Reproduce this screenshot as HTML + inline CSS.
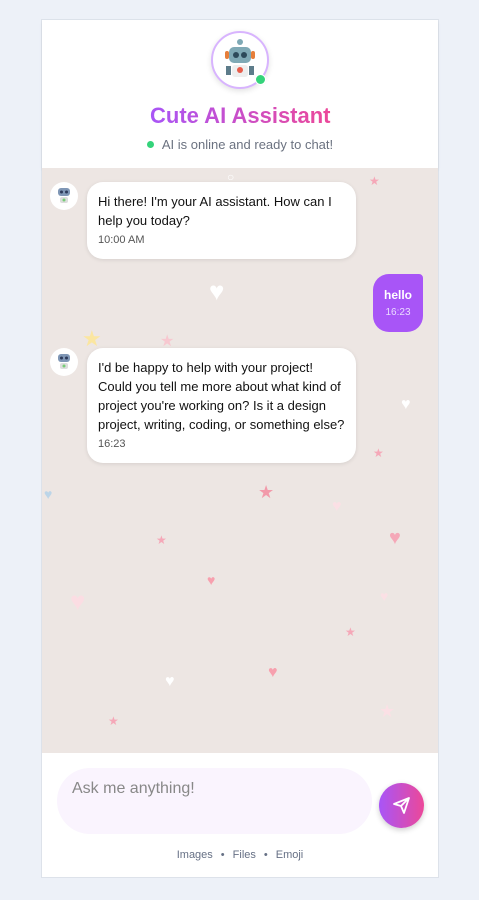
<!DOCTYPE html>
<html><head><meta charset="utf-8"><style>
*{box-sizing:border-box;margin:0;padding:0}
body{width:479px;height:900px;background:#edf1f8;font-family:"Liberation Sans",sans-serif;position:relative;overflow:hidden}
.card{position:absolute;left:41px;top:19px;width:398px;height:859px;background:#fff;border:1px solid #dde2ea}
.hdr{height:148px;text-align:center;position:relative;box-shadow:0 2px 3px rgba(0,0,0,.06)}
.av{position:absolute;left:169px;top:11px;width:58px;height:58px;border-radius:50%;border:2px solid #d8b4fe;background:#fff;box-shadow:0 2px 6px rgba(0,0,0,.12)}
.dot{position:absolute;left:213px;top:54px;width:11px;height:11px;border-radius:50%;background:#34d37a;border:1.5px solid #fff}
h1{position:absolute;left:108px;top:83px;font-size:22px;font-weight:bold;background:linear-gradient(90deg,#a855f7,#ec4899);-webkit-background-clip:text;color:transparent;background-clip:text;display:inline-block}
.st{position:absolute;left:0;right:0;top:117px;font-size:13px;color:#6b7280}
.st:before{content:"";display:inline-block;width:7px;height:7px;border-radius:50%;background:#34d37a;margin-right:8px;vertical-align:1px}
.chat{position:absolute;left:0;top:148px;width:396px;height:585px;background:#ede6e3;overflow:hidden}
.b{position:absolute;background:#fff;border-radius:16px;box-shadow:0 1px 4px rgba(0,0,0,.1);font-size:13px;line-height:19px;color:#111;padding:10px 11px}
.t{font-size:11px;color:#555;margin-top:1px}
.ra{position:absolute;width:28px;height:28px;border-radius:50%;background:#fff}
.u{position:absolute;left:331px;top:106px;width:50px;height:58px;background:#a855f7;border-radius:16px 4px 16px 16px;color:#fff;text-align:center;font-size:12px;font-weight:bold;padding-top:14px}
.u span{display:block;font-weight:normal;font-size:10px;margin-top:5px;color:#eadcff}
.in{position:absolute;left:15px;top:748px;width:315px;height:66px;border-radius:33px;background:#faf4fe;font-size:16px;color:#888;padding:12px 15px}
.send{position:absolute;left:337px;top:763px;width:45px;height:45px;border-radius:50%;background:linear-gradient(90deg,#a855f7,#ec4899);box-shadow:0 2px 6px rgba(0,0,0,.2)}
.ft{position:absolute;left:0;right:0;top:829px;text-align:center;font-size:11px;color:#667085}
.ft i{font-style:normal;margin:0 8px}
.s{position:absolute;font-size:12px}
</style></head><body>
<div class="card">
<div class="hdr">
<div class="av"><svg width="54" height="54" viewBox="0 0 54 54"><rect x="16" y="14" width="22" height="16" rx="5" fill="#7fa9b5"/><circle cx="23" cy="22" r="3" fill="#2d4a5a"/><circle cx="31" cy="22" r="3" fill="#2d4a5a"/><rect x="12" y="18" width="4" height="8" rx="2" fill="#e67e3a"/><rect x="38" y="18" width="4" height="8" rx="2" fill="#e67e3a"/><circle cx="27" cy="9" r="3" fill="#7fa9b5"/><rect x="19" y="32" width="16" height="12" rx="3" fill="#eee"/><circle cx="27" cy="37" r="3" fill="#e85c4a"/><rect x="13" y="33" width="5" height="9" fill="#5d7c8a"/><rect x="36" y="33" width="5" height="9" fill="#5d7c8a"/></svg></div>
<div class="dot"></div>
<h1>Cute AI Assistant</h1>
<div class="st">AI is online and ready to chat!</div>
</div>
<div class="chat">
<span class="s" style="left:185px;top:2px;color:#fff">○</span>
<span class="s" style="left:327px;top:6px;color:#f5a8b8">★</span>
<span class="s" style="left:167px;top:108px;color:#fff;font-size:26px">♥</span>
<span class="s" style="left:40px;top:158px;color:#fbe6a0;font-size:22px">★</span>
<span class="s" style="left:118px;top:163px;color:#f7c8d0;font-size:16px">★</span>
<span class="s" style="left:359px;top:228px;color:#fff;font-size:16px">♥</span>
<span class="s" style="left:331px;top:278px;color:#f5a8b8">★</span>
<span class="s" style="left:2px;top:318px;color:#bcd5e8;font-size:14px">♥</span>
<span class="s" style="left:216px;top:314px;color:#f29aaa;font-size:18px">★</span>
<span class="s" style="left:290px;top:330px;color:#fbe0e5;font-size:16px">♥</span>
<span class="s" style="left:347px;top:359px;color:#f5a8b8;font-size:20px">♥</span>
<span class="s" style="left:114px;top:365px;color:#f5a8b8">★</span>
<span class="s" style="left:165px;top:404px;color:#f7a0ae;font-size:14px">♥</span>
<span class="s" style="left:28px;top:418px;color:#fbdde3;font-size:26px">♥</span>
<span class="s" style="left:338px;top:420px;color:#fbe0e5;font-size:14px">♥</span>
<span class="s" style="left:303px;top:457px;color:#f5a8b8">★</span>
<span class="s" style="left:226px;top:496px;color:#f7a0ae;font-size:16px">♥</span>
<span class="s" style="left:123px;top:505px;color:#fff;font-size:16px">♥</span>
<span class="s" style="left:337px;top:533px;color:#fbe0e5;font-size:18px">★</span>
<span class="s" style="left:66px;top:546px;color:#f5a8b8">★</span>
<div class="ra" style="left:8px;top:14px"><svg width="28" height="28" viewBox="0 0 28 28"><rect x="8" y="6" width="12" height="8" rx="3" fill="#7f96b5"/><circle cx="11.5" cy="10" r="1.5" fill="#2d3a5a"/><circle cx="16.5" cy="10" r="1.5" fill="#2d3a5a"/><rect x="10" y="15" width="8" height="6" rx="2" fill="#ddd"/><circle cx="14" cy="18" r="1.5" fill="#7c7"/></svg></div>
<div class="b" style="left:45px;top:14px;width:269px;height:77px">Hi there! I'm your AI assistant. How can I help you today?<div class="t">10:00 AM</div></div>
<div class="u">hello<span>16:23</span></div>
<div class="ra" style="left:8px;top:180px"><svg width="28" height="28" viewBox="0 0 28 28"><rect x="8" y="6" width="12" height="8" rx="3" fill="#7f96b5"/><circle cx="11.5" cy="10" r="1.5" fill="#2d3a5a"/><circle cx="16.5" cy="10" r="1.5" fill="#2d3a5a"/><rect x="10" y="15" width="8" height="6" rx="2" fill="#ddd"/><circle cx="14" cy="18" r="1.5" fill="#7c7"/></svg></div>
<div class="b" style="left:45px;top:180px;width:269px;height:115px">I'd be happy to help with your project! Could you tell me more about what kind of project you're working on? Is it a design project, writing, coding, or something else?<div class="t">16:23</div></div>
</div>
<div class="in">Ask me anything!</div>
<div class="send"><svg width="45" height="45" viewBox="0 0 45 45"><path d="M15 21 L30 15 L25 30 L22 23 Z M22 23 L30 15" fill="none" stroke="#fff" stroke-width="1.8" stroke-linejoin="round"/></svg></div>
<div class="ft">Images<i>•</i>Files<i>•</i>Emoji</div>
</div>
</body></html>
